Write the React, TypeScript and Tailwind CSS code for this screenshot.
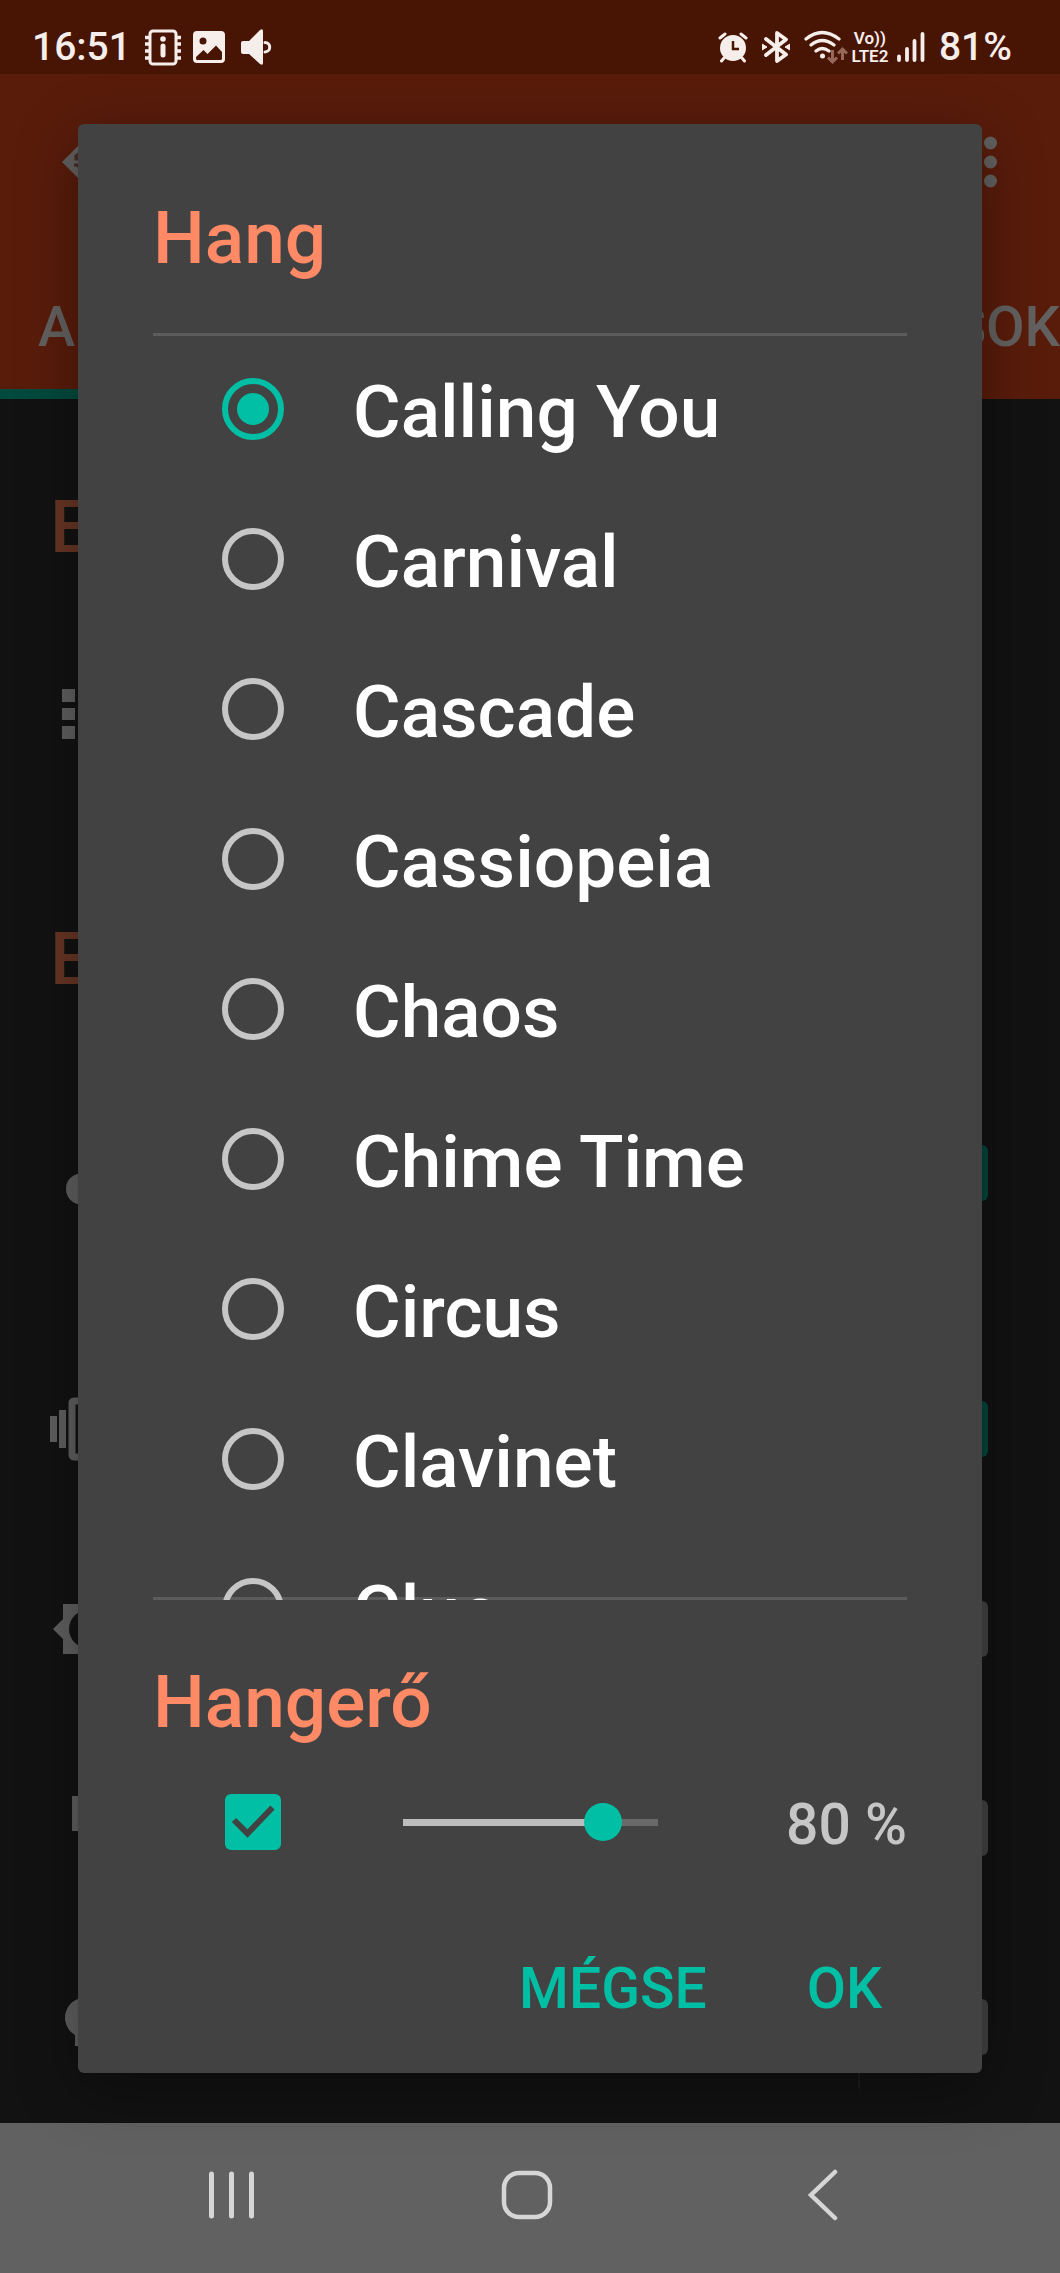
import { ReactNode, useState } from "react";

const SOUNDS = [
  "Calling You",
  "Carnival",
  "Cascade",
  "Cassiopeia",
  "Chaos",
  "Chime Time",
  "Circus",
  "Clavinet",
  "Clue",
];

const VOLUME_STEPS = 14;

const StatusBar = () => (
  <div className="h-[74px] shrink-0 bg-[#481403] text-[#f6eeeb] flex items-center justify-between pl-8 pr-12 pt-5">
    <div className="flex items-center">
      <span className="text-[39px] leading-[48px] font-medium">16:51</span>
      <svg className="ml-[14px] w-[36px] h-[37px]" viewBox="0 0 36 37" fill="none">
        <rect x="5" y="2" width="26" height="33" rx="3" stroke="currentColor" strokeWidth="3" />
        <path
          d="M0 8.500h4M0 15h4M0 22h4M0 29h4M32 8.500h4M32 15h4M32 22h4M32 29h4"
          stroke="currentColor"
          strokeWidth="3.500"
        />
        <circle cx="18" cy="10" r="2.800" fill="currentColor" />
        <path d="M18 17v9" stroke="currentColor" strokeWidth="5" strokeLinecap="round" />
      </svg>
      <svg className="ml-3 w-[32px] h-[32px]" viewBox="0 0 32 32">
        <path
          fill="currentColor"
          fillRule="evenodd"
          d="M4 0h24a4 4 0 0 1 4 4v24a4 4 0 0 1-4 4H4a4 4 0 0 1-4-4V4a4 4 0 0 1 4-4ZM10 6.500a3.500 3.500 0 1 0 0 7a3.500 3.500 0 1 0 0-7ZM3 26v1.500q0 1.500 1.500 1.500h23q1.500 0 1.500-1.500V21l-6-6.500l-8.500 8.500l-4-4Z"
        />
      </svg>
      <svg className="ml-4 w-[32px] h-[36px]" viewBox="0 0 32 36">
        <path fill="currentColor" d="M2 12h6L19 1q3-2 3 1v32q0 3-3 1L8 25H2q-2 0-2-2V14q0-2 2-2Z" />
        <path
          d="M24 13.500a4.700 4.700 0 0 1 0 9.400"
          fill="none"
          stroke="currentColor"
          strokeWidth="3"
          strokeLinecap="round"
        />
      </svg>
    </div>
    <div className="flex items-center">
      <svg className="w-[30px] h-[32px]" viewBox="0 0 30 32">
        <circle cx="15" cy="17" r="13" fill="currentColor" />
        <path
          d="M2 7l5-4M28 7l-5-4M6 27l-2.500 3M24 27l2.500 3"
          stroke="currentColor"
          strokeWidth="3"
          strokeLinecap="round"
        />
        <path d="M15 10v8h6" fill="none" stroke="#481403" strokeWidth="2.500" />
      </svg>
      <svg className="ml-[14px] w-[28px] h-[32px]" viewBox="0 0 28 32" fill="none" stroke="currentColor">
        <path
          d="M4 8l20 15.500L15 30V2l9 6.500L4 24"
          strokeWidth="3.800"
          strokeLinecap="round"
          strokeLinejoin="round"
        />
        <path d="M0 13l5 3l-5 3ZM28 13l-5 3l5 3Z" fill="currentColor" strokeWidth="1" />
      </svg>
      <svg className="ml-[14px] w-[44px] h-[34px]" viewBox="0 0 44 34" fill="none" stroke="currentColor">
        <g strokeWidth="3.200" strokeLinecap="round">
          <path d="M2 9q16-13 33 0M7 15q11-9 23 0M12 21q6-5 13 0" />
        </g>
        <circle cx="18.500" cy="26" r="2.500" fill="currentColor" stroke="none" />
        <g stroke="#96675a" strokeWidth="3">
          <path d="M28.500 20v12M24 27.500l4.500 4.500L33 27.500M38.500 30V19M34 23.500l4.500-4.500l4.500 4.500" />
        </g>
      </svg>
      <div className="ml-[3px] w-[38px] flex flex-col items-center font-semibold text-[17px] leading-[18px]">
        <span>Vo))</span>
        <span>LTE2</span>
      </div>
      <svg
        className="ml-2 w-[28px] h-[30px]"
        viewBox="0 0 28 30"
        stroke="currentColor"
        strokeWidth="3.800"
        strokeLinecap="round"
      >
        <path d="M2 24.500v3.500M10 17v11M17.500 9v19M25.500 2v26" />
      </svg>
      <span className="ml-[14px] text-[39px] leading-[48px] font-medium">81%</span>
    </div>
  </div>
);

const AppHeader = () => (
  <header className="h-[325px] shrink-0 bg-[#591c0b] text-[#636160] flex flex-col justify-between">
    <div className="h-[176px] flex items-center justify-between pl-[62px] pr-[63px]">
      <svg className="w-[56px] h-[56px]" viewBox="0 0 56 56">
        <path fill="currentColor" d="M0 28L28 0l28 28l-28 28Z" />
        <path d="M19 18l-5 4v3h5M12 31h3l3 3" fill="none" stroke="#462b24" strokeWidth="3" />
      </svg>
      <svg className="w-[13px] h-[52px]" viewBox="0 0 13 52" fill="currentColor">
        <circle cx="6.500" cy="7" r="6.500" />
        <circle cx="6.500" cy="26" r="6.500" />
        <circle cx="6.500" cy="45" r="6.500" />
      </svg>
    </div>
    <nav className="h-[149px] flex flex-col justify-between text-[56px] leading-[68px] font-medium">
      <div className="flex justify-between pl-[38px] pt-[43px]">
        <a href="#">A</a>
        <a href="#">SOK</a>
      </div>
      <div className="h-[10px] w-1/2 bg-[#004a3e]" />
    </nav>
  </header>
);

const SettingRow = ({
  icon,
  checked,
  className,
  divided,
}: {
  icon: ReactNode;
  checked?: boolean;
  className: string;
  divided?: boolean;
}) => (
  <div className={`flex items-center justify-between pl-[50px] pr-[72px] shrink-0 ${className}`}>
    <svg className="w-[72px] h-[72px] text-[#5f5f5f]" viewBox="0 0 72 72" fill="currentColor">
      {icon}
    </svg>
    {checked !== undefined && (
      <div className="flex items-center gap-[72px]">
        {divided && <span className="w-[2px] h-[124px] bg-[#1c1c1c]" />}
        <span
          className={`size-14 rounded-md ${checked ? "bg-[#00453a]" : "bg-[#424242]"}`}
        />
      </div>
    )}
  </div>
);

const SettingsPage = () => (
  <main className="grow min-h-0 overflow-hidden bg-[#121212] pt-[38px] flex flex-col">
    <h2 className="h-[180px] shrink-0 flex items-center pl-[50px] text-[73px] leading-[84px] font-medium text-[#673524]">
      E
    </h2>
    <SettingRow
      className="h-[194px]"
      icon={<path d="M12 11h13v13H12ZM12 30h13v12H12ZM12 48h13v13H12ZM30 11h30v13H30ZM30 30h30v12H30ZM30 48h30v13H30Z" />}
    />
    <h2 className="mt-[58px] h-[180px] shrink-0 flex items-center pl-[50px] text-[73px] leading-[84px] font-medium text-[#673524]">
      E
    </h2>
    <SettingRow
      className="h-[248px]"
      checked
      icon={<path d="M16 52a15.500 15.500 0 0 1 24-13V4h18v12H47v36a15.500 15.500 0 0 1-31 0Z" />}
    />
    <SettingRow
      className="mt-8 h-[200px]"
      checked
      icon={
        <>
          <path d="M0 23h7v26H0ZM9 17h7v38H9Z" />
          <rect x="22" y="8" width="28" height="56" rx="2" fill="none" stroke="currentColor" strokeWidth="7" />
        </>
      }
    />
    <SettingRow
      className="h-[199px]"
      checked={false}
      icon={
        <path
          fillRule="evenodd"
          d="M3 36l10-10V11h15l10-9l10 9h15v15l9 10l-9 10v15H48l-10 9l-10-9H13V46ZM38 17a19 19 0 1 0 0 38a19 19 0 1 0 0-38Z"
        />
      }
    />
    <SettingRow
      className="h-[199px]"
      checked={false}
      icon={<path d="M22 4h34v56H44V39H22Z" />}
    />
    <SettingRow
      className="h-[199px]"
      checked={false}
      divided
      icon={<path d="M25 44a20 20 0 1 1 20 0v11H25Z" />}
    />
  </main>
);

const SoundDialog = () => {
  const [sound, setSound] = useState(SOUNDS[0]);
  const [volumeEnabled, setVolumeEnabled] = useState(true);
  const [level, setLevel] = useState(11);
  const percent = Math.round((level / VOLUME_STEPS) * 20) * 5;

  return (
    <div
      role="dialog"
      aria-labelledby="sound-title"
      className="absolute inset-x-[78px] top-[124px] bottom-[200px] rounded-md bg-[#424242] shadow-[0_16px_60px_rgba(0,0,0,0.35)] px-[75px] flex flex-col"
    >
      <h1
        id="sound-title"
        className="h-[212px] shrink-0 border-b-3 border-[#5c5c5c] pt-[72px] text-[73px] leading-[84px] font-medium text-[#ff8a65]"
      >
        Hang
      </h1>
      {/* the bottom rule is an inset shadow so that scrolled rows pass over it */}
      <div
        role="radiogroup"
        aria-labelledby="sound-title"
        className="grow min-h-0 overflow-y-auto [scrollbar-width:none] shadow-[inset_0_-3px_0_#5c5c5c]"
      >
        {SOUNDS.map((name) => (
          <label key={name} className="h-[150px] pl-[69px] pb-[5px] flex items-center gap-[69px]">
            <input
              type="radio"
              name="sound"
              checked={sound === name}
              onChange={() => setSound(name)}
              className="appearance-none size-[62px] shrink-0 rounded-full border-[6px] border-[#c6c6c6] checked:border-[#00bfa5] flex items-center justify-center checked:before:size-8 checked:before:rounded-full checked:before:bg-[#00bfa5]"
            />
            <span className="pt-[6px] text-[73px] leading-[84px] font-medium text-white">{name}</span>
          </label>
        ))}
      </div>
      <h2
        id="volume-title"
        className="shrink-0 pt-[60px] text-[73px] leading-[84px] font-medium text-[#ff8a65]"
      >
        Hangerő
      </h2>
      <div className="shrink-0 h-[156px] flex items-center pl-[72px]">
        <span className="relative size-14 shrink-0">
          <input
            type="checkbox"
            aria-labelledby="volume-title"
            checked={volumeEnabled}
            onChange={(e) => setVolumeEnabled(e.target.checked)}
            className="peer block appearance-none size-14 rounded-md border-[6px] border-[#c6c6c6] checked:border-[#00bfa5] checked:bg-[#00bfa5]"
          />
          <svg
            className="absolute inset-0 size-14 pointer-events-none hidden peer-checked:block"
            viewBox="0 0 56 56"
          >
            <path d="M9 26l13.500 13.500L47.500 13.500" fill="none" stroke="#424242" strokeWidth="6" />
          </svg>
        </span>
        <div className="relative ml-[103px] w-[293px] h-[38px] flex items-center px-[19px]">
          <div className="grow h-[7px] bg-[#696969]">
            <div
              className="h-full bg-[#bdbdbd]"
              style={{ width: `${(level / VOLUME_STEPS) * 100}%` }}
            />
          </div>
          <input
            type="range"
            aria-labelledby="volume-title"
            min={0}
            max={VOLUME_STEPS}
            value={level}
            onChange={(e) => setLevel(Number(e.target.value))}
            className="absolute inset-0 w-full h-full appearance-none bg-transparent [&::-webkit-slider-thumb]:appearance-none [&::-webkit-slider-thumb]:size-[38px] [&::-webkit-slider-thumb]:rounded-full [&::-webkit-slider-thumb]:bg-[#00bfa5]"
          />
        </div>
        <output className="ml-auto pt-[6px] text-[57px] leading-[64px] font-medium text-[#c6c6c6]">
          {percent} %
        </output>
      </div>
      <div className="shrink-0 h-[173px] pr-[25px] flex items-start justify-end gap-[100px] pt-[57px] text-[57px] leading-[64px] font-medium text-[#00bfa5]">
        <button type="button">MÉGSE</button>
        <button type="button">OK</button>
      </div>
    </div>
  );
};

const NavigationBar = () => (
  <div className="h-[150px] shrink-0 bg-[#616161] text-[#d6d6d6] grid grid-cols-3 items-center justify-items-center pl-[84px] pr-[89px] pb-[6px]">
    <svg className="w-[48px] h-[50px]" viewBox="0 0 48 50" stroke="currentColor" strokeWidth="5" strokeLinecap="round">
      <path d="M3.500 4v42M23.500 4v42M43.500 4v42" />
    </svg>
    <svg className="w-[52px] h-[50px]" viewBox="0 0 52 50" fill="none" stroke="currentColor" strokeWidth="4.500">
      <rect x="3" y="3" width="46" height="44" rx="15" />
    </svg>
    <svg className="w-[30px] h-[52px]" viewBox="0 0 30 52" fill="none" stroke="currentColor" strokeWidth="4.500" strokeLinecap="round">
      <path d="M27 3L3 26l24 23" />
    </svg>
  </div>
);

const App = () => (
  <div className="relative min-w-0 h-dvh min-h-[1200px] overflow-hidden flex flex-col bg-[#121212] font-['Roboto',sans-serif]">
    <StatusBar />
    <AppHeader />
    <SettingsPage />
    <NavigationBar />
    <SoundDialog />
  </div>
);

export default App;
